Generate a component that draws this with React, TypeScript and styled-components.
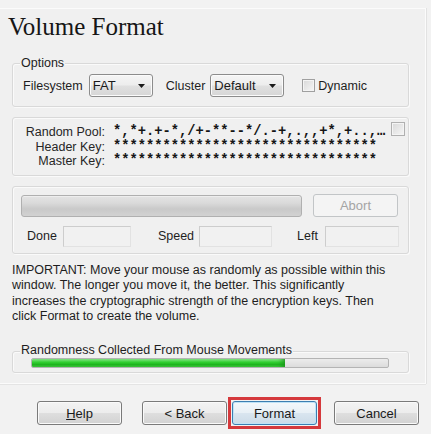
import React from "react";
import styled, { createGlobalStyle } from "styled-components";

const GlobalStyle = createGlobalStyle`
  html, body {
    margin: 0;
    padding: 0;
    background: #f2f2f2;
  }
  body {
    font-family: "Liberation Sans", Arial, sans-serif;
    font-size: 12.5px;
    color: #1e1e1e;
  }
  * { box-sizing: border-box; }
`;

const Page = styled.div`
  width: 431px;
  height: 434px;
  padding-top: 8px;
  overflow: hidden;
`;

const Panel = styled.div`
  width: 426px;
  height: 376px;
  background: #f0f0f0;
  border-top: 1px solid #fbfbfb;
  border-right: 1px solid #fbfbfb;
  border-bottom: 1px solid #fbfbfb;
  box-shadow: 1px 0 0 #e2e2e2, 0 1px 0 #e4e4e4;
  padding: 0 16px 0 12px;
  display: flex;
  flex-direction: column;
`;

const Title = styled.h1`
  margin: 4px 0 0 -4px;
  font-family: "Liberation Serif", "Times New Roman", serif;
  font-weight: normal;
  font-size: 25px;
  line-height: 28px;
  color: #161616;
`;

const GroupBox = styled.div<{ $mt: number }>`
  position: relative;
  margin-top: ${(p) => p.$mt}px;
  border: 1px solid #d9d9d9;
  border-radius: 3px;
  box-shadow: inset 1px 1px 0 #fafafa, 1px 1px 0 #fafafa;
`;

const GroupLabel = styled.span<{ $top: number }>`
  position: absolute;
  left: 7px;
  top: ${(p) => p.$top}px;
  padding: 0 1px;
  line-height: 14px;
  background: #f0f0f0;
  color: #1e1e1e;
`;

const OptionsRow = styled.div`
  display: flex;
  align-items: center;
  height: 23px;
  margin: 10px 0 9px 10px;
`;

const FieldLabel = styled.span<{ $ml: number }>`
  margin-left: ${(p) => p.$ml}px;
  white-space: nowrap;
`;

const Combo = styled.div<{ $w: number; $ml: number }>`
  width: ${(p) => p.$w}px;
  height: 23px;
  margin-left: ${(p) => p.$ml}px;
  display: flex;
  align-items: center;
  justify-content: space-between;
  padding: 0 7px 0 3px;
  border: 1px solid #8c8c8c;
  border-radius: 3px;
  background: linear-gradient(#f5f5f5 0%, #ededed 48%, #e0e0e0 52%, #d6d6d6 100%);
  box-shadow: inset 0 0 0 1px #fbfbfb;
  font-size: 13px;
  color: #1a1a1a;
`;

const ComboArrow = () => (
  <svg width="7" height="4" viewBox="0 0 7 4">
    <path d="M0 0 H7 L3.5 4 Z" fill="#1a1a1a" />
  </svg>
);

const CheckBox = styled.span<{ $ml: number; $size: number }>`
  display: inline-block;
  width: ${(p) => p.$size}px;
  height: ${(p) => p.$size}px;
  margin-left: ${(p) => p.$ml}px;
  border: 1px solid #a0a0a0;
  background: linear-gradient(135deg, #d8d8d8, #f6f6f6);
  box-shadow: inset 0 0 0 1px #f4f4f4;
  flex: none;
`;

const KeyGrid = styled.div`
  display: grid;
  grid-template-columns: 92px 272px 14px;
  grid-auto-rows: 14.5px;
  column-gap: 8px;
  padding: 7px 0 6px 0;
  align-items: center;
`;

const KeyLabel = styled.span`
  text-align: right;
  white-space: nowrap;
  line-height: 14.5px;
  color: #262626;
`;

const KeyValue = styled.span`
  font-family: "Liberation Mono", "Courier New", monospace;
  font-weight: bold;
  font-size: 13.75px;
  line-height: 14.5px;
  white-space: nowrap;
  color: #151515;
`;

const PoolCheck = styled(CheckBox)`
  align-self: start;
  margin-top: -3px;
  border-color: #b0b0b0;
`;

const ProgressRow = styled.div`
  display: flex;
  align-items: flex-start;
  padding: 7px 0 0 8px;
  height: 30px;
`;

const ProgressTrack = styled.div`
  width: 281px;
  height: 22px;
  margin-top: 1px;
  border: 1px solid #b0b0b0;
  border-radius: 3px;
  background: linear-gradient(#e4e4e4 0%, #dadada 35%, #c9c9c9 65%, #d2d2d2 100%);
  box-shadow: inset 0 1px 0 #eeeeee;
`;

const DisabledButton = styled.div`
  width: 85px;
  height: 23px;
  margin-left: 11px;
  display: flex;
  align-items: center;
  justify-content: center;
  border: 1px solid #c2c5c7;
  border-radius: 3px;
  background: #f4f4f4;
  color: #a4a4a4;
  font-size: 13px;
`;

const StatsRow = styled.div`
  display: flex;
  align-items: center;
  height: 21px;
  margin: 9px 0 6px 14px;
`;

const StatField = styled.span<{ $w: number; $ml: number }>`
  width: ${(p) => p.$w}px;
  height: 21px;
  margin-left: ${(p) => p.$ml}px;
  border: 1px solid #e2e2e2;
  border-top-color: #cdcdcd;
  border-left-color: #cdcdcd;
  background: #f1f1f1;
`;

const Notice = styled.p`
  margin: 9px 0 0 0;
  line-height: 15.6px;
  white-space: nowrap;
  color: #1e1e1e;
`;

const RandomTrack = styled.div`
  width: 358px;
  height: 10px;
  margin: 6px 0 4px 18px;
  border: 1px solid #b4b4b4;
  border-radius: 2px;
  background: linear-gradient(#ececec, #dcdcdc);
  overflow: hidden;
`;

const RandomFill = styled.div`
  height: 100%;
  background: linear-gradient(#8ce98c 0%, #33d033 40%, #1fb41f 70%, #3ec93e 100%);
  box-shadow: inset -6px 0 6px -4px #1a8f1a;
`;

const ButtonBar = styled.div`
  display: flex;
  align-items: center;
  margin-top: 13px;
  padding-left: 37px;
`;

const DialogButton = styled.button<{ $ml: number; $primary?: boolean }>`
  width: 85px;
  height: 24px;
  margin: 0 0 0 ${(p) => p.$ml}px;
  padding: 0;
  font-family: "Liberation Sans", Arial, sans-serif;
  font-size: 13px;
  color: #1a1a1a;
  border: 1px solid ${(p) => (p.$primary ? "#3c7fb1" : "#7a7a7a")};
  border-radius: 3px;
  background: ${(p) =>
    p.$primary
      ? "linear-gradient(#f3f8fb 0%, #e8f0f6 48%, #d9e5ef 52%, #cbdbe8 100%)"
      : "linear-gradient(#f3f3f3 0%, #ececec 48%, #dedede 52%, #d2d2d2 100%)"};
  box-shadow: inset 0 0 0 1px ${(p) => (p.$primary ? "#bfe3f7" : "#fafafa")};
`;

const Highlight = styled.span`
  display: inline-flex;
  margin-left: 1px;
  padding: 1px;
  border: 3px solid #d5393c;
`;

const Mnemonic = styled.span`
  text-decoration: underline;
`;

export default function App() {
  const pool = "*,*+.+-*,/+-**--*/.-+,.,,+*,+..,\u2026";
  const stars = "*".repeat(32);
  return (
    <>
      <GlobalStyle />
      <Page>
        <Panel>
          <Title>Volume Format</Title>

          <GroupBox $mt={22}>
            <GroupLabel $top={-8}>Options</GroupLabel>
            <OptionsRow>
              <FieldLabel $ml={0}>Filesystem</FieldLabel>
              <Combo $w={64} $ml={6}>
                <span>FAT</span>
                <ComboArrow />
              </Combo>
              <FieldLabel $ml={13}>Cluster</FieldLabel>
              <Combo $w={74} $ml={5}>
                <span>Default</span>
                <ComboArrow />
              </Combo>
              <CheckBox $ml={18} $size={13} />
              <FieldLabel $ml={3}>Dynamic</FieldLabel>
            </OptionsRow>
          </GroupBox>

          <GroupBox $mt={10}>
            <KeyGrid>
              <KeyLabel>Random Pool:</KeyLabel>
              <KeyValue>{pool}</KeyValue>
              <PoolCheck $ml={-2} $size={14} />
              <KeyLabel>Header Key:</KeyLabel>
              <KeyValue>{stars}</KeyValue>
              <span />
              <KeyLabel>Master Key:</KeyLabel>
              <KeyValue>{stars}</KeyValue>
              <span />
            </KeyGrid>
          </GroupBox>

          <GroupBox $mt={10}>
            <ProgressRow>
              <ProgressTrack />
              <DisabledButton>Abort</DisabledButton>
            </ProgressRow>
            <StatsRow>
              <FieldLabel $ml={0}>Done</FieldLabel>
              <StatField $w={68} $ml={6} />
              <FieldLabel $ml={27}>Speed</FieldLabel>
              <StatField $w={73} $ml={5} />
              <FieldLabel $ml={25}>Left</FieldLabel>
              <StatField $w={74} $ml={7} />
            </StatsRow>
          </GroupBox>

          <Notice>
            IMPORTANT: Move your mouse as randomly as possible within this
            <br />
            window. The longer you move it, the better. This significantly
            <br />
            increases the cryptographic strength of the encryption keys. Then
            <br />
            click Format to create the volume.
          </Notice>

          <GroupBox $mt={26}>
            <GroupLabel $top={-9}>Randomness Collected From Mouse Movements</GroupLabel>
            <RandomTrack>
              <RandomFill style={{ width: `${(254 / 358) * 100}%` }} />
            </RandomTrack>
          </GroupBox>
        </Panel>

        <ButtonBar>
          <DialogButton $ml={0}>
            <Mnemonic>H</Mnemonic>elp
          </DialogButton>
          <DialogButton $ml={20}>&lt; Back</DialogButton>
          <Highlight>
            <DialogButton $ml={0} $primary>
              Format
            </DialogButton>
          </Highlight>
          <DialogButton $ml={13}>Cancel</DialogButton>
        </ButtonBar>
      </Page>
    </>
  );
}
